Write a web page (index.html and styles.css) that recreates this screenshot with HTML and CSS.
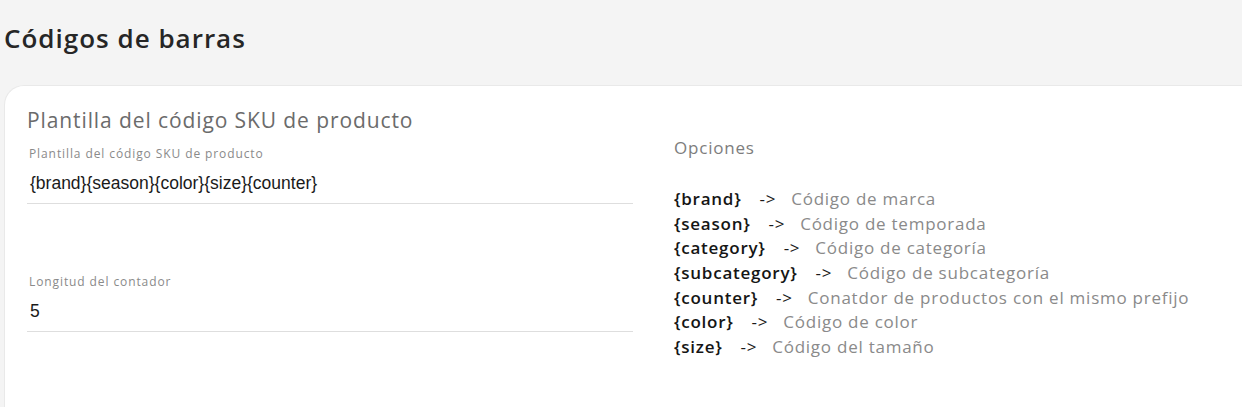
FILE: index.html
```html
<!DOCTYPE html>
<html lang="es">
<head>
<meta charset="utf-8">
<title>Códigos de barras</title>
<link rel="stylesheet" href="styles.css">
</head>
<body>
<div class="page">
  <h1 class="page-title">Códigos de barras</h1>
  <div class="card">
    <div class="col-left">
      <h2 class="card-title">Plantilla del código SKU de producto</h2>
      <div class="field">
        <label class="field-label">Plantilla del código SKU de producto</label>
        <div class="field-value">{brand}{season}{color}{size}{counter}</div>
      </div>
      <div class="field field-second">
        <label class="field-label">Longitud del contador</label>
        <div class="field-value">5</div>
      </div>
    </div>
    <div class="col-right">
      <div class="options-title">Opciones</div>
      <ul class="options">
        <li><span class="key">{brand}</span><span class="arrow">-&gt;</span><span class="desc">Código de marca</span></li>
        <li><span class="key">{season}</span><span class="arrow">-&gt;</span><span class="desc">Código de temporada</span></li>
        <li><span class="key">{category}</span><span class="arrow">-&gt;</span><span class="desc">Código de categoría</span></li>
        <li><span class="key">{subcategory}</span><span class="arrow">-&gt;</span><span class="desc">Código de subcategoría</span></li>
        <li><span class="key">{counter}</span><span class="arrow">-&gt;</span><span class="desc">Conatdor de productos con el mismo prefijo</span></li>
        <li><span class="key">{color}</span><span class="arrow">-&gt;</span><span class="desc">Código de color</span></li>
        <li><span class="key">{size}</span><span class="arrow">-&gt;</span><span class="desc">Código del tamaño</span></li>
      </ul>
    </div>
  </div>
</div>
</body>
</html>
```

FILE: styles.css
```css
* { box-sizing: border-box; }
html, body { margin: 0; padding: 0; }
body {
  background: #f4f4f4;
  font-family: "Open Sans", "Noto Sans", sans-serif;
  color: #222;
  width: 1242px;
  height: 407px;
  overflow: hidden;
}
.page {
  padding: 21px 0 0 4px;
}
.page-title {
  margin: 0;
  font-size: 26px;
  font-weight: 600;
  color: #262626;
  line-height: 34px;
  height: 64px;
  letter-spacing: 1px;
}
.card {
  background: #fff;
  border: 1px solid #e9e9e9;
  border-right: none;
  border-top-left-radius: 20px;
  margin-right: -20px;
  height: 340px;
  display: flex;
  padding: 19px 0 0 22px;
}
.col-left {
  width: 606px;
}
.card-title {
  margin: 0;
  font-size: 21px;
  font-weight: 400;
  color: #6b6b6b;
  line-height: 30px;
  letter-spacing: 0.9px;
}
.field {
  margin-top: 11px;
  border-bottom: 1px solid #dedede;
  padding-left: 2px;
  height: 58px;
}
.field-second {
  margin-top: 70px;
}
.field-label {
  display: block;
  font-size: 12px;
  color: #8a8a8a;
  line-height: 16px;
  letter-spacing: 0.9px;
}
.field-value {
  margin-top: 9px;
  font-family: "Liberation Sans", Arial, sans-serif;
  font-size: 17.5px;
  line-height: 24px;
  color: #1a1a1a;
  padding-left: 1px;
  letter-spacing: 0;
}
.col-right {
  margin-left: 41px;
  padding-top: 31px;
}
.options-title {
  font-size: 17px;
  color: #7d7d7d;
  line-height: 24px;
  letter-spacing: 0.8px;
}
.options {
  list-style: none;
  margin: 27px 0 0 0;
  padding: 0;
}
.options li {
  font-size: 17px;
  line-height: 24.7px;
  height: 24.7px;
  white-space: nowrap;
  letter-spacing: 0.75px;
}
.key {
  font-weight: 600;
  color: #151515;
}
.arrow {
  color: #1a1a1a;
  margin: 0 15px 0 18px;
}
.desc {
  color: #8a8a8a;
}
```
